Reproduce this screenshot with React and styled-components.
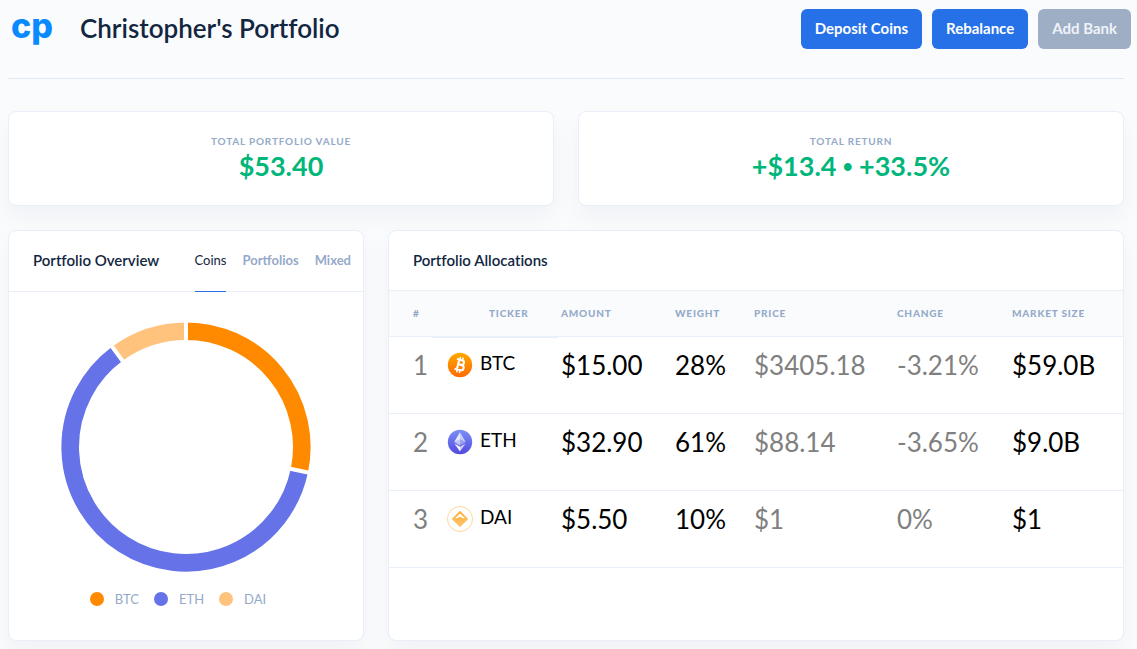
import React from "react";
import styled, { createGlobalStyle } from "styled-components";

const color = {
  page: "#f9fbfd",
  ink: "#12263f",
  muted: "#95aac9",
  line: "#e8eff8",
  blue: "#2671e8",
  green: "#00b67a",
};

const GlobalStyle = createGlobalStyle`
  *, *::before, *::after { box-sizing: border-box; }
  body {
    margin: 0;
    background: ${color.page};
    color: ${color.ink};
    font-family: Lato, "Liberation Sans", sans-serif;
    font-size: 15px;
    font-variant-ligatures: none;
  }
  h1, h2, p { margin: 0; }
`;

const Page = styled.div`
  padding: 0 13px 8px 8px;
`;

const Header = styled.header`
  display: flex;
  align-items: flex-start;
  height: 79px;
  border-bottom: 1px solid #e0e8f4;
  padding-top: 9px;
`;

const Logo = styled.a`
  width: 72px;
  padding-left: 3px;
  color: #0a8aff;
  font-family: Inter, Lato, sans-serif;
  font-size: 34px;
  font-weight: 800;
  line-height: 34px;
  text-decoration: none;
`;

const Title = styled.h1`
  flex: 1;
  font-size: 26px;
  font-weight: 600;
  line-height: 38px;
`;

const Actions = styled.div`
  display: flex;
  gap: 10px;
  margin-right: -7px;
`;

const Button = styled.button`
  height: 40px;
  padding: 0 14px 2px;
  border: 0;
  border-radius: 6px;
  background: ${(p) => (p.$muted ? "#9eaec5" : color.blue)};
  color: ${(p) => (p.$muted ? "#eff3f8" : "#fff")};
  font-family: inherit;
  font-size: 15px;
  font-weight: 700;
  white-space: nowrap;
`;

const Row = styled.div`
  display: grid;
  grid-template-columns: ${(p) => p.$columns};
  gap: 24px;
  margin-top: ${(p) => (p.$first ? "32px" : "24px")};
`;

const Card = styled.section`
  min-width: 0;
  border: 1px solid ${color.line};
  border-radius: 8px;
  background: #fff;
  box-shadow: 0 12px 24px rgba(18, 38, 63, 0.04);
`;

const Stat = styled(Card)`
  height: 95px;
  padding-top: 21px;
  text-align: center;
`;

const StatLabel = styled.h2`
  color: ${color.muted};
  font-size: 10px;
  font-weight: 700;
  letter-spacing: 0.08em;
  line-height: 16px;
  text-transform: uppercase;
`;

const StatValue = styled.p`
  color: ${color.green};
  font-size: 27px;
  font-weight: 700;
  line-height: 34px;
`;

const Bullet = styled.span`
  font-family: "Liberation Sans", sans-serif;
`;

const CardHeader = styled.div`
  display: flex;
  align-items: center;
  justify-content: space-between;
  height: ${(p) => (p.$ruled ? "61px" : "59px")};
  padding: 0 12px 0 24px;
  border-bottom: ${(p) => (p.$ruled ? `1px solid ${color.line}` : "0")};
`;

const CardTitle = styled.h2`
  padding-bottom: 2px;
  font-size: 15px;
  font-weight: 600;
  white-space: nowrap;
`;

const Tabs = styled.div`
  display: flex;
  align-self: stretch;
  gap: 16px;
  margin-bottom: -1px;
`;

const Tab = styled.button`
  padding: 0 0 2px;
  border: 0;
  border-bottom: 1px solid ${(p) => (p.$active ? color.blue : "transparent")};
  background: none;
  color: ${(p) => (p.$active ? color.ink : color.muted)};
  font-family: inherit;
  font-size: 13px;
  font-weight: ${(p) => (p.$active ? 400 : 700)};
`;

const ChartBody = styled.div`
  display: flex;
  flex-direction: column;
  align-items: center;
  padding: 30px 0 33px;
`;

const Legend = styled.ul`
  display: flex;
  gap: 15px;
  margin: 19px 16px 0 0;
  padding: 0;
  list-style: none;
`;

const LegendItem = styled.li`
  display: flex;
  align-items: center;
  gap: 11px;
  color: ${color.muted};
  font-size: 13px;
  line-height: 16px;

  &::before {
    content: "";
    width: 14px;
    height: 14px;
    border-radius: 50%;
    background: ${(p) => p.$color};
  }
`;

const Table = styled.table`
  width: 100%;
  border-collapse: separate;
  border-spacing: 0;
  table-layout: fixed;
`;

const Th = styled.th`
  position: relative;
  height: 47px;
  padding: 0 0 1px ${(p) => p.$indent || 0}px;
  border-top: 1px solid ${color.line};
  border-bottom: 1px solid ${color.line};
  background: ${color.page};
  color: ${color.muted};
  font-size: 10px;
  font-weight: 900;
  letter-spacing: 0.08em;
  text-align: left;
  text-transform: uppercase;
  white-space: nowrap;
`;

const SortLine = styled.span`
  position: absolute;
  top: 46px;
  right: 3px;
  left: -15px;
  height: 1px;
  background: ${color.line};
`;

const Td = styled.td`
  height: 77px;
  padding: 12px 0 0 ${(p) => p.$indent || 0}px;
  border-bottom: 1px solid ${color.line};
  color: ${(p) => (p.$dim ? "#808080" : "#000")};
  font-size: 26px;
  line-height: 32px;
  vertical-align: top;
  white-space: nowrap;
`;

const Coin = styled.div`
  display: flex;
  align-items: center;
  gap: 7px;
  height: 32px;
  font-size: 19px;
`;

const CoinName = styled.span`
  padding-bottom: 4px;
`;

const BtcIcon = () => (
  <svg width="26" height="26" viewBox="0 0 26 26" aria-hidden="true">
    <defs>
      <linearGradient id="btc" x1="0" y1="0" x2="0" y2="1">
        <stop offset="0" stopColor="#ffa900" />
        <stop offset="1" stopColor="#ff6a00" />
      </linearGradient>
    </defs>
    <circle cx="13" cy="13" r="12.2" fill="url(#btc)" />
    <g transform="rotate(14 13 13)" fill="none" stroke="#fff">
      <path
        d="M8.6 8H13.8C17.2 8 17.2 12.6 13.8 12.6H11.2H14.3C18.3 12.6 18.3 17.9 14.3 17.9H8.6M11 8V17.9"
        strokeWidth="2.1"
      />
      <path d="M11.5 5V8M14.3 5V8M11.5 17.9V20.9M14.3 17.9V20.9" strokeWidth="1.5" />
    </g>
  </svg>
);

const EthIcon = () => (
  <svg width="26" height="26" viewBox="0 0 26 26" aria-hidden="true">
    <defs>
      <linearGradient id="eth" x1="0" y1="0" x2="0" y2="1">
        <stop offset="0" stopColor="#7c8ff5" />
        <stop offset="1" stopColor="#5149e0" />
      </linearGradient>
    </defs>
    <circle cx="13" cy="13" r="12.2" fill="url(#eth)" />
    <path d="M13 3.2L7.2 13 13 10.4z" fill="#fff" opacity=".85" />
    <path d="M13 3.2L18.8 13 13 10.4z" fill="#fff" opacity=".6" />
    <path d="M7.2 13L13 10.4V16.4z" fill="#fff" opacity=".6" />
    <path d="M18.8 13L13 10.4V16.4z" fill="#fff" opacity=".35" />
    <path d="M7.4 14.4L13 17.7V22.4z" fill="#fff" opacity=".95" />
    <path d="M18.6 14.4L13 17.7V22.4z" fill="#fff" opacity=".7" />
  </svg>
);

const DaiIcon = () => (
  <svg width="26" height="26" viewBox="0 0 26 26" aria-hidden="true">
    <defs>
      <linearGradient id="dai" x1="0" y1="0" x2="0" y2="1">
        <stop offset="0" stopColor="#ffac2e" />
        <stop offset="1" stopColor="#ffc670" />
      </linearGradient>
    </defs>
    <circle cx="13" cy="13" r="12.5" fill="#fff" stroke="#ffd596" />
    <path
      d="M13 4.8L21.2 13 13 21.2 4.8 13zM13 7.4L8.2 12.2H9.9L13 10.8 16.1 12.2H17.8z"
      fill="url(#dai)"
      fillRule="evenodd"
    />
  </svg>
);

const coins = [
  { name: "BTC", Icon: BtcIcon, color: "#ff8a00", share: 28, amount: "$15.00", price: "$3405.18", change: "-3.21%", size: "$59.0B" },
  { name: "ETH", Icon: EthIcon, color: "#6673e8", share: 61, amount: "$32.90", price: "$88.14", change: "-3.65%", size: "$9.0B" },
  { name: "DAI", Icon: DaiIcon, color: "#ffc37d", share: 10, amount: "$5.50", price: "$1", change: "0%", size: "$1" },
];

const point = (turn, radius) => {
  const angle = turn * 2 * Math.PI;
  return `${125 + radius * Math.sin(angle)} ${125 - radius * Math.cos(angle)}`;
};

function Donut() {
  const total = coins.reduce((sum, coin) => sum + coin.share, 0);
  let start = 0;
  const slices = coins.map((coin) => {
    const slice = { ...coin, start, end: start + coin.share / total };
    start = slice.end;
    return slice;
  });
  return (
    <svg width="250" height="250" viewBox="0 0 250 250" role="img" aria-label="Share of each coin">
      {slices.map((s) => (
        <path
          key={s.name}
          d={`M${point(s.start, 115.8)}A115.8 115.8 0 ${s.end - s.start > 0.5 ? 1 : 0} 1 ${point(s.end, 115.8)}`}
          fill="none"
          stroke={s.color}
          strokeWidth="17.6"
        />
      ))}
      {slices.map((s) => (
        <path key={s.name} d={`M${point(s.start, 104)}L${point(s.start, 127)}`} stroke="#fff" strokeWidth="4" />
      ))}
    </svg>
  );
}

export default function App() {
  return (
    <>
      <GlobalStyle />
      <Page>
        <Header>
          <Logo href="#">cp</Logo>
          <Title>Christopher's Portfolio</Title>
          <Actions>
            <Button type="button">Deposit Coins</Button>
            <Button type="button">Rebalance</Button>
            <Button type="button" $muted>Add Bank</Button>
          </Actions>
        </Header>
        <main>
          <Row $first $columns="1fr 1fr">
            <Stat>
              <StatLabel>Total Portfolio Value</StatLabel>
              <StatValue>$53.40</StatValue>
            </Stat>
            <Stat>
              <StatLabel>Total Return</StatLabel>
              <StatValue>+$13.4 <Bullet>•</Bullet> +33.5%</StatValue>
            </Stat>
          </Row>
          <Row $columns="calc(100% / 3 - 16px) 1fr">
            <Card>
              <CardHeader $ruled>
                <CardTitle>Portfolio Overview</CardTitle>
                <Tabs>
                  <Tab type="button" $active>Coins</Tab>
                  <Tab type="button">Portfolios</Tab>
                  <Tab type="button">Mixed</Tab>
                </Tabs>
              </CardHeader>
              <ChartBody>
                <Donut />
                <Legend>
                  {coins.map((coin) => (
                    <LegendItem key={coin.name} $color={coin.color}>{coin.name}</LegendItem>
                  ))}
                </Legend>
              </ChartBody>
            </Card>
            <Card>
              <CardHeader>
                <CardTitle>Portfolio Allocations</CardTitle>
              </CardHeader>
              <Table>
                <colgroup>
                  <col width="58" />
                  <col width="114" />
                  <col width="114" />
                  <col width="79" />
                  <col width="143" />
                  <col width="115" />
                  <col width="111" />
                </colgroup>
                <thead>
                  <tr>
                    <Th $indent={24}>#</Th>
                    <Th $indent={42}>Ticker<SortLine /></Th>
                    <Th>Amount</Th>
                    <Th>Weight</Th>
                    <Th>Price</Th>
                    <Th>Change</Th>
                    <Th>Market Size</Th>
                  </tr>
                </thead>
                <tbody>
                  {coins.map(({ name, Icon, share, amount, price, change, size }, index) => (
                    <tr key={name}>
                      <Td $dim $indent={24}>{index + 1}</Td>
                      <Td>
                        <Coin>
                          <Icon />
                          <CoinName>{name}</CoinName>
                        </Coin>
                      </Td>
                      <Td>{amount}</Td>
                      <Td>{share}%</Td>
                      <Td $dim>{price}</Td>
                      <Td $dim>{change}</Td>
                      <Td>{size}</Td>
                    </tr>
                  ))}
                </tbody>
              </Table>
            </Card>
          </Row>
        </main>
      </Page>
    </>
  );
}
